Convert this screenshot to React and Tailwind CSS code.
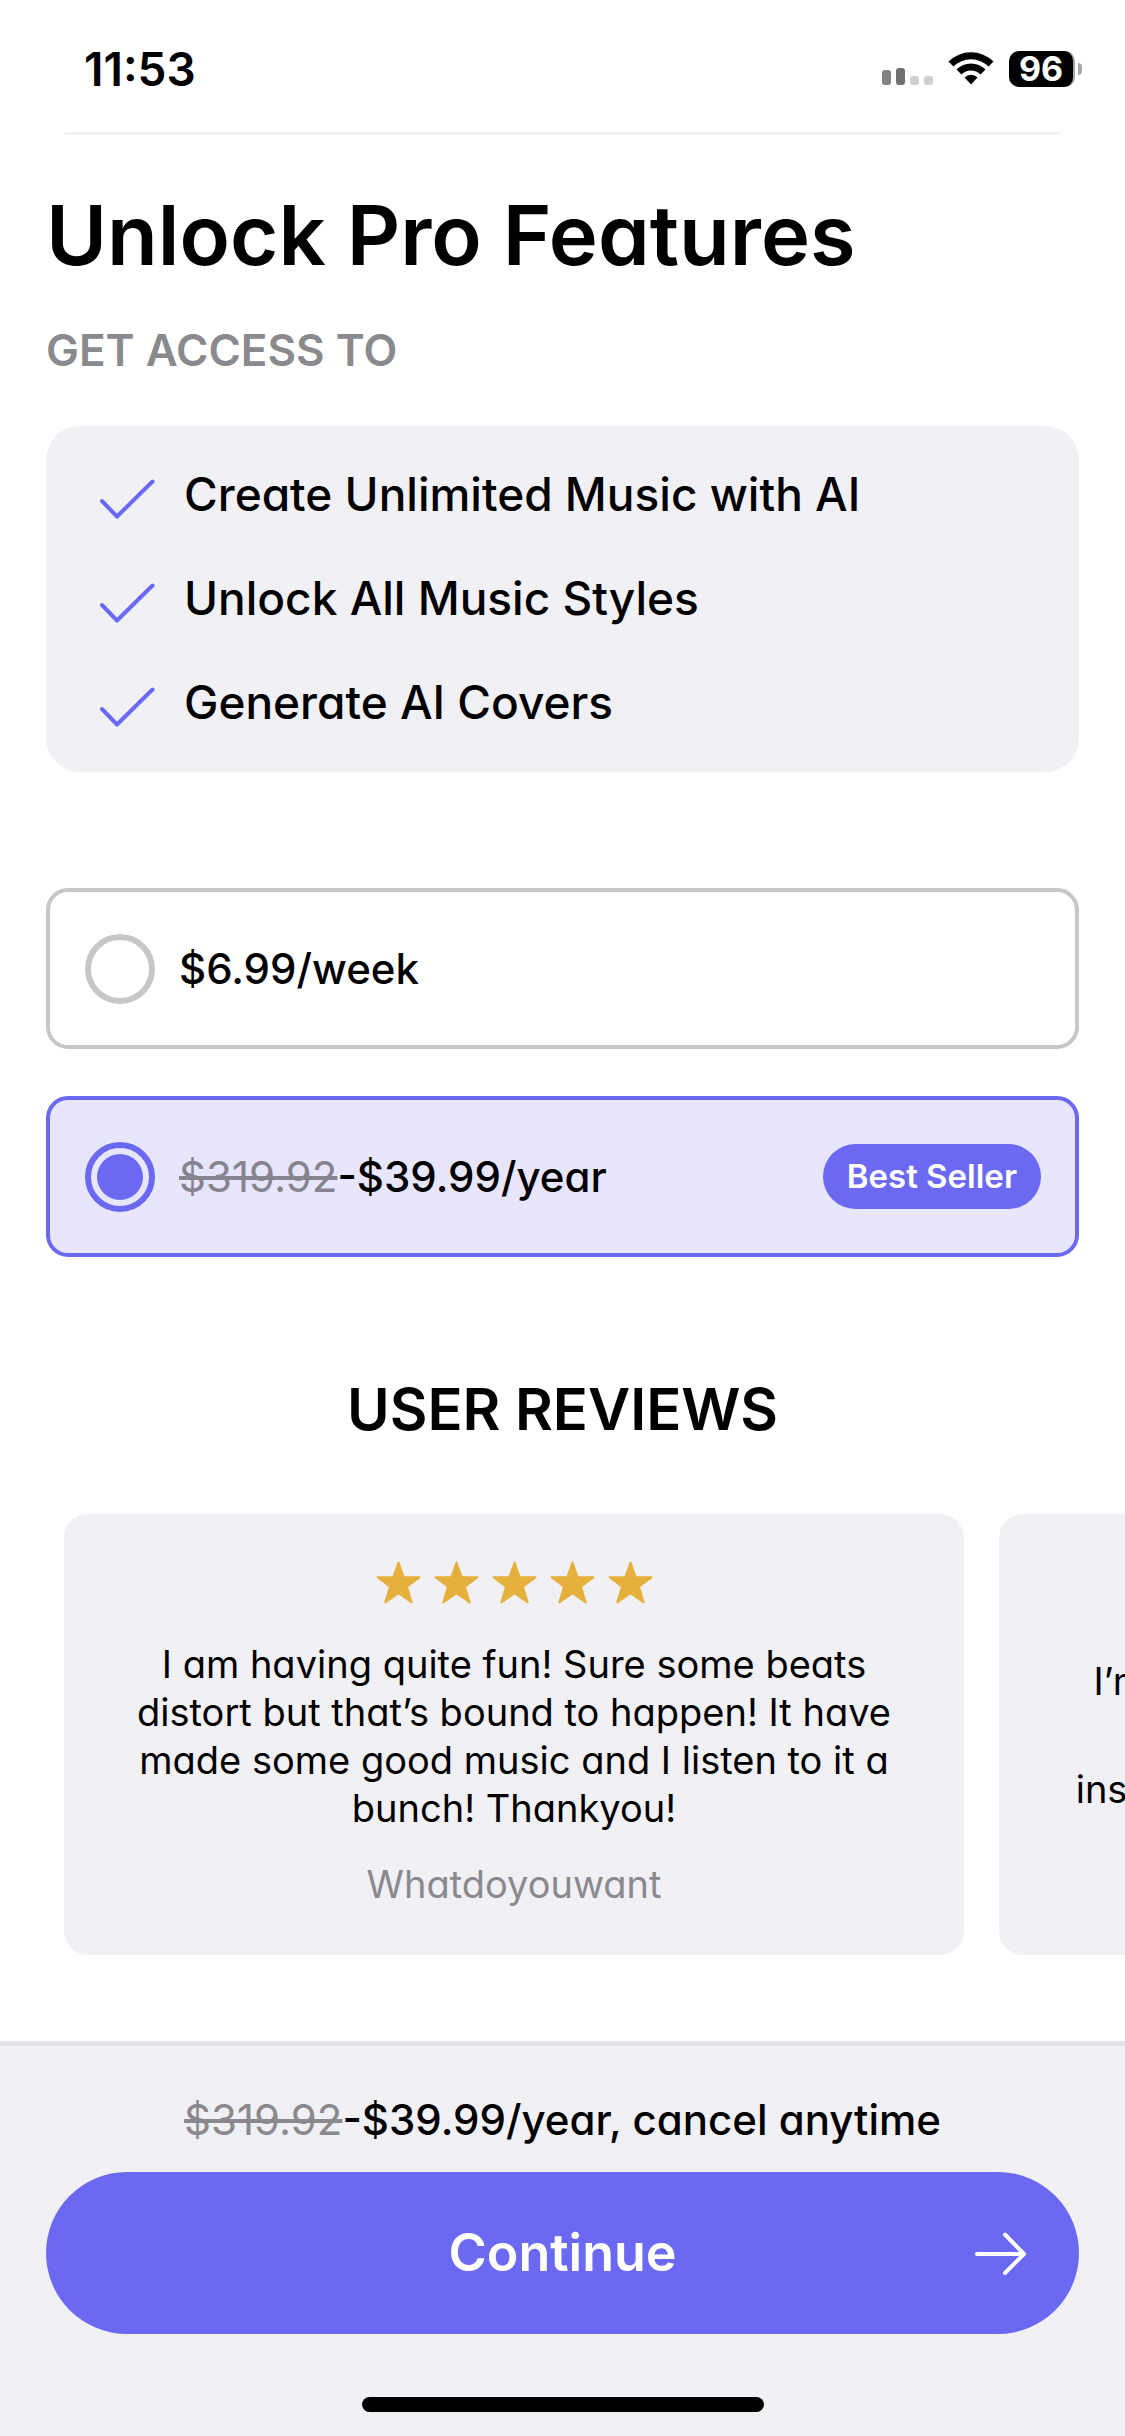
import React, { useState } from 'react';

const features = [
  'Create Unlimited Music with AI',
  'Unlock All Music Styles',
  'Generate AI Covers',
];

const plans = [
  { id: 'week', price: '$6.99/week' },
  { id: 'year', oldPrice: '$319.92', price: '$39.99/year', badge: 'Best Seller' },
];

function CheckIcon() {
  return (
    <svg className="w-14 h-14 shrink-0" viewBox="0 0 56 56" fill="none" aria-hidden="true">
      <path
        d="M2 35L17 50.5L52.500 15.500"
        stroke="#6b69f2"
        strokeWidth="4"
        strokeLinecap="round"
        strokeLinejoin="round"
      />
    </svg>
  );
}

function ArrowIcon() {
  return (
    <svg className="w-[52px] h-[44px]" viewBox="0 0 52 44" fill="none" aria-hidden="true">
      <path
        d="M2 23H48.500M30 3.500L49 23L30 42"
        stroke="white"
        strokeWidth="4"
        strokeLinecap="round"
        strokeLinejoin="round"
      />
    </svg>
  );
}

function Star() {
  return (
    <svg className="w-[45px] h-[43px]" viewBox="0 0 45 43" aria-hidden="true">
      <path
        d="M22.500 1.500L27.700 16.300H43.500L31 25.700L35.700 41.500L22.500 32.300L9.300 41.500L14 25.700L1.500 16.300H17.300Z"
        fill="#e5b13c"
        stroke="#e5b13c"
        strokeWidth="2"
        strokeLinejoin="round"
      />
    </svg>
  );
}

function StatusBar() {
  return (
    <div className="flex h-[132px] items-center justify-between pt-[6px] pl-[84px] pr-[43px]">
      <span className="text-[46px] leading-[56px] font-semibold">11:53</span>
      <div className="flex items-center gap-[15px]">
        <svg className="w-[51px] h-[36px]" viewBox="0 0 51 36" aria-hidden="true">
          <rect x="0" y="19" width="9" height="15" rx="3" fill="#828282" />
          <rect x="14" y="17" width="9" height="17" rx="3" fill="#707070" />
          <rect x="28" y="25" width="9" height="9" rx="3" fill="#cfcfcf" />
          <rect x="42" y="25" width="9" height="9" rx="3" fill="#cfcfcf" />
        </svg>
        <svg className="w-[46px] h-[36px]" viewBox="0 0 46 36" aria-hidden="true">
          <path d="M0.500 10.500A32 32 0 0 1 45.500 10.500L40.500 15.500A25 25 0 0 0 5.500 15.500Z" />
          <path d="M8.500 18.500A20.500 20.500 0 0 1 37.500 18.500L32.500 23.500A13.500 13.500 0 0 0 13.500 23.500Z" />
          <path d="M16.500 26.500A9.200 9.200 0 0 1 29.500 26.500L23 33.500Z" />
        </svg>
        <div className="flex items-center gap-[3px]">
          <div className="flex h-[36px] w-[66px] items-center justify-center rounded-[10px] border-r-2 border-[#a6a6a6] bg-black text-[34px] leading-[36px] font-bold text-white">
            96
          </div>
          <div className="h-3 w-1 rounded-r-full bg-[#a6a6a6]" />
        </div>
      </div>
    </div>
  );
}

function PlanOption({ plan, selected, onSelect }) {
  return (
    <label
      className={`flex min-h-[161px] cursor-pointer items-center rounded-[22px] border-4 pl-[35px] pr-[34px] ${
        selected ? 'border-[#6b69f2] bg-[#e7e6fd]' : 'border-[#c7c7c9] bg-white'
      }`}
    >
      <input
        type="radio"
        name="plan"
        value={plan.id}
        checked={selected}
        onChange={onSelect}
        className="h-[70px] w-[70px] shrink-0 cursor-pointer appearance-none rounded-full border-[6px] border-[#c7c7c9] bg-clip-content p-[6px] checked:border-[#6b69f2] checked:bg-[#6b69f2]"
      />
      <span className="ml-6 flex-1 text-[42px] leading-[56px] font-medium">
        {plan.oldPrice && (
          <>
            <s className="font-normal text-[#85848f]">{plan.oldPrice}</s>-
          </>
        )}
        {plan.price}
      </span>
      {plan.badge && (
        <span className="rounded-full bg-[#6b69f2] px-6 py-3 text-[33px] leading-[41px] font-semibold text-white">
          {plan.badge}
        </span>
      )}
    </label>
  );
}

function App() {
  const [selected, setSelected] = useState('year');

  return (
    <div className="flex min-h-screen flex-col overflow-x-hidden bg-white font-['Inter',sans-serif] text-black [font-feature-settings:'cv11'] [font-optical-sizing:none]">
      <StatusBar />
      <div className="mx-16 h-[3px] rounded-full bg-[#f2f2f2]" />

      <main className="flex-1 pb-[86px]">
        <div className="px-[46px] pt-[55px]">
          <h1 className="text-[83px] leading-[90px] font-semibold">Unlock Pro Features</h1>
          <h2 className="mt-[46px] text-[44px] leading-[48px] font-semibold text-[#8a8a8e]">GET ACCESS TO</h2>

          <ul className="mt-[52px] flex flex-col gap-12 rounded-[34px] bg-[#f1f0f5] pt-10 pr-8 pb-[42px] pl-[54px]">
            {features.map((feature) => (
              <li key={feature} className="flex items-center gap-7">
                <CheckIcon />
                <span className="text-[46px] leading-[56px] font-medium">{feature}</span>
              </li>
            ))}
          </ul>

          <div className="mt-[116px] flex flex-col gap-[47px]">
            {plans.map((plan) => (
              <PlanOption
                key={plan.id}
                plan={plan}
                selected={selected === plan.id}
                onSelect={() => setSelected(plan.id)}
              />
            ))}
          </div>
        </div>

        <h2 className="mt-[120px] text-center text-[58px] leading-[64px] font-semibold">USER REVIEWS</h2>

        <div className="mt-[73px] flex gap-[35px] overflow-hidden pl-16">
          <article className="flex min-h-[441px] w-[900px] shrink-0 flex-col items-center rounded-[24px] bg-[#f1f0f5] px-14 pt-[47px] pb-[46px] text-center">
            <div className="flex gap-[13px]" role="img" aria-label="5 out of 5 stars">
              {[1, 2, 3, 4, 5].map((n) => (
                <Star key={n} />
              ))}
            </div>
            <p className="mt-9 text-[38px] leading-[48px]">
              I am having quite fun! Sure some beats distort but that’s bound to happen! It have made some good music and I listen to it a bunch! Thankyou!
            </p>
            <p className="mt-7 text-[38px] leading-[48px] text-[#8a8a8e]">Whatdoyouwant</p>
          </article>
          <article className="flex w-[900px] shrink-0 flex-col justify-center rounded-[24px] bg-[#f1f0f5] px-14 text-center">
            <p className="text-[38px] leading-[54px] whitespace-nowrap">
              I’m not a musician, but I enjoy making it
              <br />
              and every song I make
              <br />
              inspires me to write new songs every day
            </p>
          </article>
        </div>
      </main>

      <footer className="border-t-[5px] border-[#e5e4e9] bg-[#f1f0f5] px-[46px] pt-[46px] pb-6">
        <p className="text-center text-[42px] leading-[56px] font-medium">
          <s className="font-normal text-[#8a8a8e]">$319.92</s>-$39.99/year, cancel anytime
        </p>
        <button
          type="button"
          className="mt-6 grid h-[162px] w-full grid-cols-[1fr_auto_1fr] items-center rounded-full bg-[#6b69f2] px-[52px] text-white"
        >
          <span className="col-start-2 text-[52px] leading-[56px] font-semibold">Continue</span>
          <span className="justify-self-end">
            <ArrowIcon />
          </span>
        </button>
        <div className="mx-auto mt-[63px] h-[15px] w-[402px] rounded-full bg-black" />
      </footer>
    </div>
  );
}

export default App;
